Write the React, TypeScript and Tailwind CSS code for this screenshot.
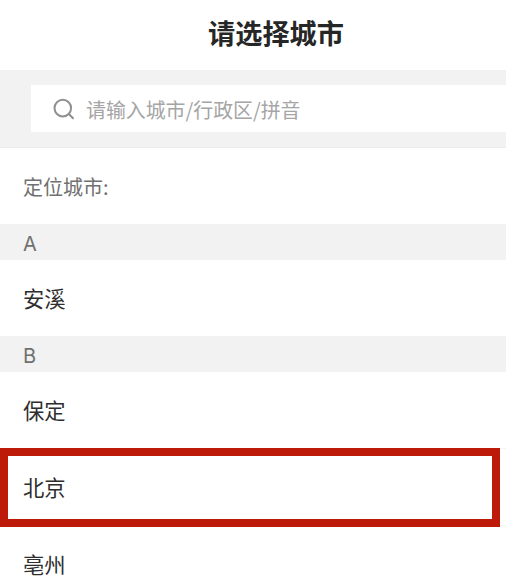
interface CitySection {
  letter: string;
  cities: string[];
}

const SECTIONS: CitySection[] = [
  { letter: 'A', cities: ['安溪'] },
  { letter: 'B', cities: ['保定', '北京', '亳州'] },
];

const SELECTED_CITY = '北京';

function SearchBar() {
  return (
    <div className="h-[78px] bg-[#f2f2f2] pt-[15px] pl-[31px] border-b border-[#ebebeb]">
      <div className="flex items-center h-[47px] bg-white pl-[22px]">
        <svg className="w-[22px] h-[22px] shrink-0" viewBox="0 0 22 22" fill="none" stroke="#909090" strokeWidth="2" strokeLinecap="round">
          <circle cx="9.8" cy="10.1" r="8.3" />
          <path d="M15.8 16 L20 20.3" />
        </svg>
        <span className="ml-[11px] pt-[3px] text-[19.9px] leading-none text-[#a5a5a5] whitespace-nowrap">请输入城市/行政区/拼音</span>
      </div>
    </div>
  );
}

function CityRow({ name, selected }: { name: string; selected: boolean }) {
  if (selected) {
    return (
      <div className="h-[78px] border-y border-[#f5f5f5]">
        <div className="-my-px h-[79px] w-[500px] flex items-center pl-[15px] pb-[2px] border-8 border-[#be1a0a]">
          {name}
        </div>
      </div>
    );
  }
  return <div className="h-[76px] flex items-center pl-[23px] pb-px">{name}</div>;
}

export default function App() {
  return (
    <div className="w-full h-[576px] overflow-hidden bg-white font-['Noto_Sans_CJK_SC',sans-serif] text-[21.3px] leading-none text-[#2e2e2e]">
      <h1 className="h-[70px] flex items-center justify-center pl-[46px] pb-[5px] text-[27.2px] font-bold text-[#262626]">请选择城市</h1>
      <SearchBar />
      <div className="h-[76px] flex items-center pl-[23px] pt-px text-[20px] text-[#707070]">定位城市:</div>
      {SECTIONS.map((section) => (
        <section key={section.letter}>
          <div className="h-[36px] flex items-center bg-[#f2f2f2] pl-[23px] pt-[3px] font-['Inter','Noto_Sans_CJK_SC',sans-serif] text-[20px] text-[#707070]">
            {section.letter}
          </div>
          {section.cities.map((city) => (
            <CityRow key={city} name={city} selected={city === SELECTED_CITY} />
          ))}
        </section>
      ))}
    </div>
  );
}
